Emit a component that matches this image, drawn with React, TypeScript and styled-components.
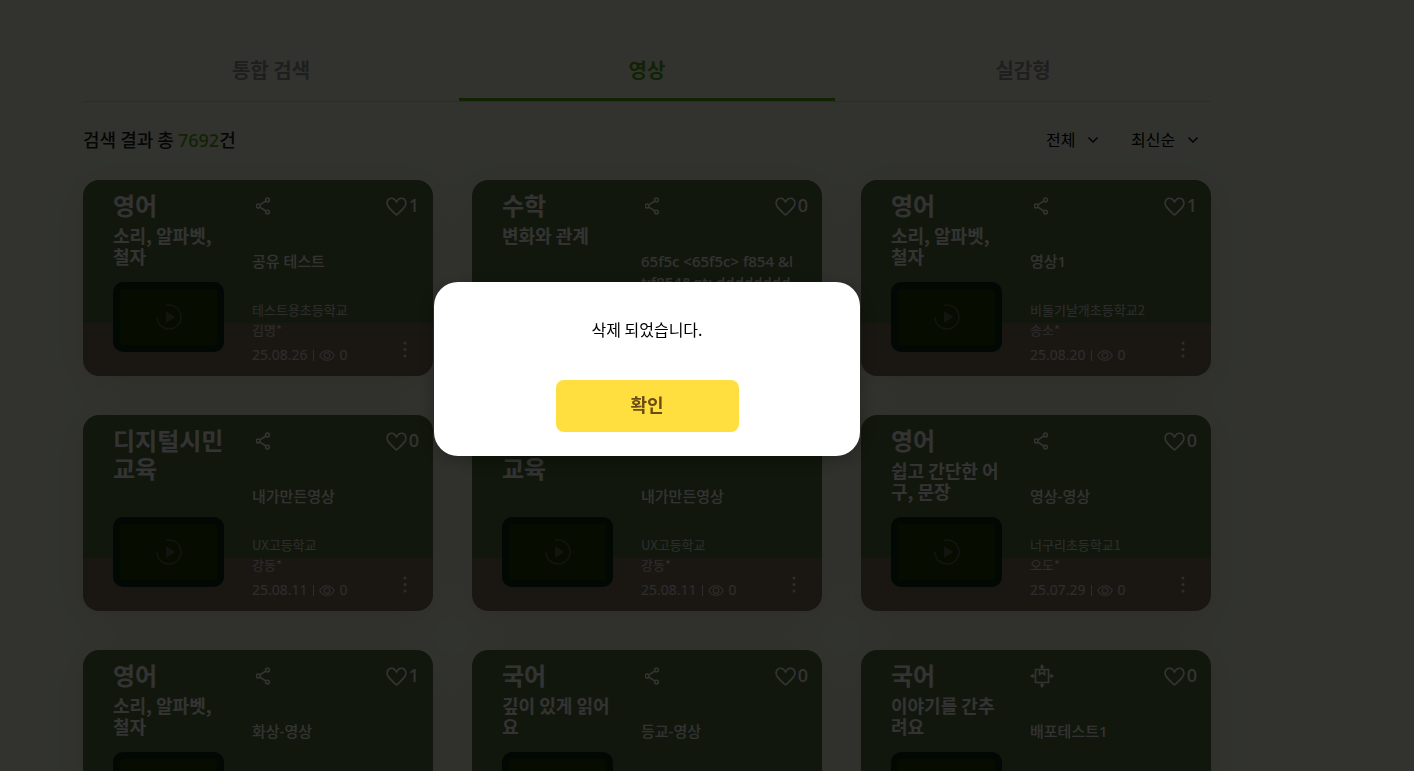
import React from "react";
import styled, { createGlobalStyle } from "styled-components";

const GlobalStyle = createGlobalStyle`
  *, *::before, *::after { box-sizing: border-box; }
  body {
    margin: 0;
    background: #f8ffe6;
    color: #222;
    font-family: "Noto Sans CJK KR", "Noto Sans", sans-serif;
    overflow: hidden;
  }
  button, select { font: inherit; color: inherit; }
  h2, h3, p { margin: 0; }
`;

const Page = styled.main`
  padding: 41px 120px 40px 0;
`;

const Content = styled.div`
  width: 100%;
  max-width: 1128px;
  margin: 0 auto;
`;

const Tabs = styled.nav`
  display: grid;
  grid-template-columns: repeat(3, 1fr);
  border-bottom: 1px solid #dcdcdc;
`;

const Tab = styled.a<{ $active?: boolean }>`
  height: 60px;
  line-height: 58px;
  border-bottom: 3px solid ${(p) => (p.$active ? "#5aaa14" : "transparent")};
  color: ${(p) => (p.$active ? "#5aaa14" : "#999")};
  font-size: 20px;
  font-weight: 700;
  text-align: center;
  text-decoration: none;
`;

const Summary = styled.div`
  display: flex;
  align-items: center;
  justify-content: space-between;
  height: 78px;
  padding-bottom: 2px;
  font-size: 18px;
  font-weight: 500;

  p { padding-bottom: 2px; }
`;

const Total = styled.span`
  color: #5aaa14;
  font-family: "Noto Sans", sans-serif;
`;

const Filters = styled.div`
  display: flex;
  gap: 20px;
`;

const SelectBox = styled.label`
  position: relative;
  display: flex;
  align-items: center;

  svg {
    position: absolute;
    right: 13px;
    pointer-events: none;
  }
`;

const Select = styled.select`
  appearance: none;
  border: 0;
  background: transparent;
  padding: 0 35px 2px 0;
  color: #000;
  font-size: 16px;
  font-weight: 400;
`;

const Cards = styled.ul`
  display: grid;
  grid-template-columns: repeat(3, minmax(0, 1fr));
  gap: 39px;
  margin: 0;
  padding: 0;
  list-style: none;
`;

const Card = styled.li`
  display: grid;
  grid-template-columns: 111px minmax(0, 1fr);
  column-gap: 28px;
  height: 196px;
  padding: 11px 14px 10px 30px;
  border-radius: 16px;
  background: linear-gradient(#57733f 143px, #82735f 143px);
  box-shadow: 0 6px 40px rgba(80, 30, 20, 0.12);
  color: #fff;
`;

const Column = styled.div`
  display: flex;
  flex-direction: column;
`;

const Subject = styled.h2`
  font-size: 24px;
  line-height: 28px;
  font-weight: 700;
`;

const Unit = styled.p`
  margin-top: 6px;
  font-size: 18px;
  line-height: 21px;
  font-weight: 700;
`;

const Thumb = styled.button`
  display: flex;
  align-items: center;
  justify-content: center;
  width: 111px;
  height: 70px;
  margin-top: auto;
  margin-bottom: 14px;
  padding: 0;
  border: 7px solid #0a2814;
  border-radius: 10px;
  background: #233c05;
  color: #5a6450;
`;

const Actions = styled.div`
  display: flex;
  align-items: center;
  justify-content: space-between;
  height: 28px;
`;

const IconButton = styled.button`
  display: flex;
  align-items: center;
  justify-content: center;
  min-width: 24px;
  padding: 0;
  border: 0;
  background: none;
`;

const Like = styled(IconButton)`
  gap: 2px;
  font-family: "Noto Sans", sans-serif;
  font-size: 18px;
  line-height: 28px;
  font-weight: 500;
`;

const Title = styled.h3`
  height: 42px;
  margin-top: 32px;
  overflow: hidden;
  padding-right: 12px;
  font-family: "Noto Sans", "Noto Sans CJK KR", sans-serif;
  font-size: 15px;
  line-height: 21px;
  font-weight: 500;
  word-break: break-all;
`;

const Foot = styled.div`
  display: flex;
  align-items: flex-end;
  justify-content: space-between;
  margin-top: 7px;
`;

const Author = styled.p`
  color: #e0e0e0;
  font-size: 13px;
  line-height: 20px;
`;

const Meta = styled.p`
  display: flex;
  align-items: center;
  gap: 5px;
  margin-top: 5px;
  color: #e0e0e0;
  font-family: "Noto Sans", sans-serif;
  font-size: 14px;
  line-height: 20px;
`;

const Bar = styled.span`
  width: 1px;
  height: 11px;
  background: currentColor;
`;

const More = styled(IconButton)`
  height: 24px;
  min-width: 28px;
  margin-bottom: 4px;
  color: #e0e0e0;
`;

const Overlay = styled.div`
  position: fixed;
  inset: 0;
  display: flex;
  align-items: center;
  justify-content: center;
  padding: 0 120px 33px 0;
  background: rgba(0, 0, 0, 0.8);
`;

const Dialog = styled.div`
  display: flex;
  flex-direction: column;
  align-items: center;
  gap: 39px;
  width: 426px;
  padding: 35px 24px 24px;
  border-radius: 24px;
  background: #fff;
  box-shadow: 0 4px 20px rgba(0, 0, 0, 0.3);
  color: #000;
  font-size: 16px;
  line-height: 24px;
`;

const Confirm = styled.button`
  width: 183px;
  height: 52px;
  padding: 0 0 5px;
  border: 0;
  border-radius: 8px;
  background: #ffdf40;
  color: #694b14;
  font-size: 18px;
  font-weight: 700;
`;

const Chevron = () => (
  <svg width="10" height="6" viewBox="0 0 10 6" fill="none" stroke="#000" strokeWidth="1.4" aria-hidden="true">
    <path d="M.5 .5 5 5 9.500 .5" />
  </svg>
);

const ShareIcon = () => (
  <svg width="16" height="20" viewBox="1 -2 16 20" fill="none" stroke="currentColor" strokeWidth="1.5" aria-hidden="true">
    <circle cx="3.200" cy="9" r="1.900" />
    <circle cx="12.500" cy="2.900" r="1.900" />
    <circle cx="12.500" cy="15.100" r="1.900" />
    <path d="M4.800 7.900 10.900 4M4.800 10.100 10.900 14" />
  </svg>
);

const DeployIcon = () => (
  <svg width="24" height="26" viewBox="0 -2 24 26" fill="none" stroke="currentColor" strokeWidth="1.6" aria-hidden="true">
    <path d="M5.500 5.500h13v13h-13zM9.500 5.500v5l2.500-1.600 2.500 1.600v-5M12 5V2M12 19v3M5 12H2M19 12h3" />
    <path d="M12 0 14.500 3.400h-5zM12 24l2.500-3.400h-5zM0 12l3.400-2.500v5zM24 12l-3.400-2.500v5z" fill="currentColor" stroke="none" />
  </svg>
);

const HeartIcon = () => (
  <svg width="21" height="21" viewBox="0 -2 21 21" fill="none" stroke="currentColor" strokeWidth="1.6" strokeLinejoin="round" aria-hidden="true">
    <path d="M10.500 18C7 14.800 3.600 12 1.900 9 .2 5.800 1.500 1.200 5.500 1.200c2.300 0 3.900 1.500 5 4 1.100-2.500 2.700-4 5-4 4 0 5.300 4.600 3.600 7.800-1.700 3-5.100 5.800-8.600 9z" />
  </svg>
);

const PlayIcon = () => (
  <svg width="28" height="28" viewBox="0 0 28 28" aria-hidden="true">
    <path d="M11 2.400A12 12 0 1 1 2 14" fill="none" stroke="currentColor" strokeWidth="1.600" />
    <path d="M11 9.400v9.200a.8.8 0 0 0 1.200.6l7-4.500a.8.800 0 0 0 0-1.400l-7-4.500a.8.800 0 0 0-1.200.6z" fill="currentColor" />
  </svg>
);

const EyeIcon = () => (
  <svg width="16" height="11" viewBox="0 0 16 11" fill="none" stroke="currentColor" strokeWidth="1.100" aria-hidden="true">
    <path d="M.7 5.500C2.400 2.300 5 .7 8 .7s5.600 1.600 7.300 4.800c-1.700 3.200-4.300 4.800-7.300 4.800S2.400 8.700.7 5.500z" />
    <circle cx="8" cy="5.500" r="2.800" />
  </svg>
);

const DotsIcon = () => (
  <svg width="4" height="17" viewBox="0 0 4 17" fill="currentColor" aria-hidden="true">
    <circle cx="2" cy="2" r="1.500" />
    <circle cx="2" cy="8.500" r="1.500" />
    <circle cx="2" cy="15" r="1.500" />
  </svg>
);

interface Video {
  subject: string;
  unit?: string;
  title: string;
  school: string;
  teacher: string;
  date: string;
  likes: number;
  deploy?: boolean;
}

const videos: Video[] = [
  { subject: "영어", unit: "소리, 알파벳, 철자", title: "공유 테스트", school: "테스트용초등학교", teacher: "김명*", date: "25.08.26", likes: 1 },
  { subject: "수학", unit: "변화와 관계", title: "65f5c <65f5c> f854 &lt;f854&gt; dddddddd", school: "테스트용초등학교", teacher: "김명*", date: "25.08.25", likes: 0 },
  { subject: "영어", unit: "소리, 알파벳, 철자", title: "영상1", school: "비둘기날개초등학교2", teacher: "송소*", date: "25.08.20", likes: 1 },
  { subject: "디지털시민교육", title: "내가만든영상", school: "UX고등학교", teacher: "강동*", date: "25.08.11", likes: 0 },
  { subject: "디지털시민교육", title: "내가만든영상", school: "UX고등학교", teacher: "강동*", date: "25.08.11", likes: 0 },
  { subject: "영어", unit: "쉽고 간단한 어구, 문장", title: "영상-영상", school: "너구리초등학교1", teacher: "오도*", date: "25.07.29", likes: 0 },
  { subject: "영어", unit: "소리, 알파벳, 철자", title: "화상-영상", school: "너구리초등학교1", teacher: "오도*", date: "25.07.29", likes: 1 },
  { subject: "국어", unit: "깊이 있게 읽어요", title: "등교-영상", school: "너구리초등학교1", teacher: "오도*", date: "25.07.29", likes: 0 },
  { subject: "국어", unit: "이야기를 간추려요", title: "배포테스트1", school: "너구리초등학교1", teacher: "오도*", date: "25.07.29", likes: 0, deploy: true },
];

const VideoCard = ({ video }: { video: Video }) => (
  <Card>
    <Column>
      <Subject>{video.subject}</Subject>
      {video.unit && <Unit>{video.unit}</Unit>}
      <Thumb type="button" aria-label="재생">
        <PlayIcon />
      </Thumb>
    </Column>
    <Column>
      <Actions>
        <IconButton type="button" aria-label={video.deploy ? "배포" : "공유"}>
          {video.deploy ? <DeployIcon /> : <ShareIcon />}
        </IconButton>
        <Like type="button" aria-label={`좋아요 ${video.likes}`}>
          <HeartIcon />
          {video.likes}
        </Like>
      </Actions>
      <Title>{video.title}</Title>
      <Foot>
        <div>
          <Author>{video.school}</Author>
          <Author>{video.teacher}</Author>
          <Meta>
            {video.date} <Bar /> <EyeIcon /> 0
          </Meta>
        </div>
        <More type="button" aria-label="더보기">
          <DotsIcon />
        </More>
      </Foot>
    </Column>
  </Card>
);

export default function App() {
  return (
    <>
      <GlobalStyle />
      <Page>
        <Content>
          <Tabs>
            <Tab href="#all">통합 검색</Tab>
            <Tab href="#video" $active>영상</Tab>
            <Tab href="#immersive">실감형</Tab>
          </Tabs>
          <Summary>
            <p>
              검색 결과 총 <Total>7692</Total>건
            </p>
            <Filters>
              <SelectBox>
                <Select aria-label="분류">
                  <option>전체</option>
                </Select>
                <Chevron />
              </SelectBox>
              <SelectBox>
                <Select aria-label="정렬">
                  <option>최신순</option>
                </Select>
                <Chevron />
              </SelectBox>
            </Filters>
          </Summary>
          <Cards>
            {videos.map((video, index) => (
              <VideoCard key={index} video={video} />
            ))}
          </Cards>
        </Content>
      </Page>
      <Overlay>
        <Dialog role="alertdialog" aria-modal="true" aria-describedby="dialog-message">
          <p id="dialog-message">삭제 되었습니다.</p>
          <Confirm type="button">확인</Confirm>
        </Dialog>
      </Overlay>
    </>
  );
}
